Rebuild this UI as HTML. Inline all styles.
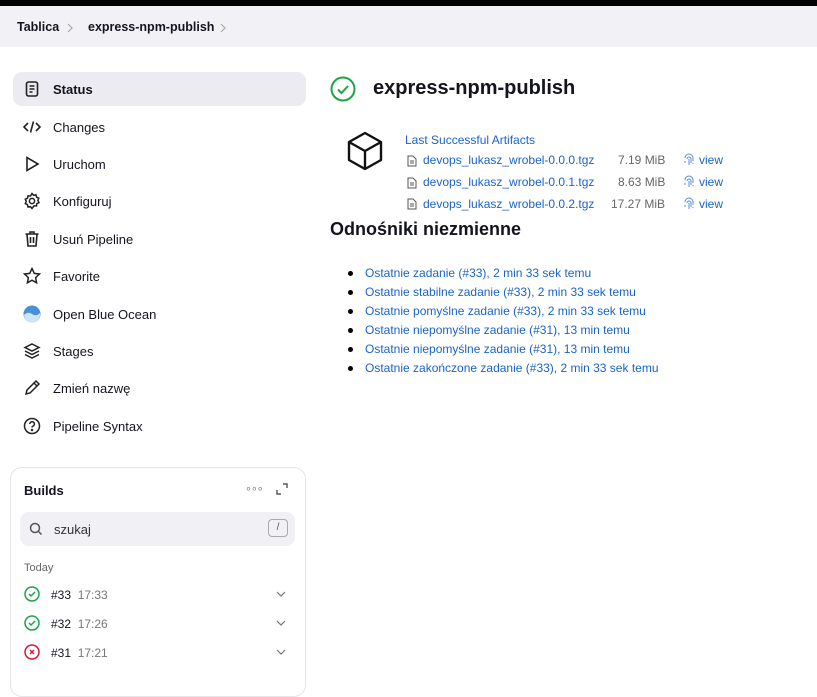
<!DOCTYPE html>
<html><head><meta charset="utf-8"><style>
*{box-sizing:border-box;margin:0;padding:0}
body{width:817px;height:674px;overflow:hidden;background:#fff;font-family:"Liberation Sans",sans-serif;color:#14141f;font-size:13px;position:relative}
.top{position:absolute;left:0;top:0;width:817px;height:6px;background:#000}
.bc{position:absolute;left:0;top:6px;width:817px;height:41px;background:#f2f2f6;font-size:12.5px;font-weight:bold}
.bc span{position:absolute;top:14px}
.it{position:absolute;left:13px;width:293px;height:34px;border-radius:9px}
.it .ic{position:absolute;left:10px;top:8px;width:18px;height:18px}
.it .t{position:absolute;left:40px;top:10px;font-size:13px}
.sel{background:#ebebf1}
a{color:#1a63c8;text-decoration:none}
.card{position:absolute;left:10px;top:467px;width:296px;height:230px;border:1px solid #e5e5ea;border-radius:12px}
.search{position:absolute;left:20px;top:512px;width:275px;height:34px;background:#f0f0f5;border-radius:9px}
li{position:absolute;left:365px;font-size:12px;list-style:none}
li:before{content:"";position:absolute;left:-17px;top:5px;width:5px;height:5px;border-radius:50%;background:#000}
.f{position:absolute;font-size:12px}
</style></head><body>
<div class="top"></div>
<div class="bc"><span style="left:17px">Tablica</span><svg style="position:absolute;left:67px;top:17px" width="7" height="10" fill="none" stroke="#aaa" stroke-width="1.2"><path d="M1 1l4 4-4 4"/></svg><span style="left:88px">express-npm-publish</span><svg style="position:absolute;left:220px;top:17px" width="7" height="10" fill="none" stroke="#aaa" stroke-width="1.2"><path d="M1 1l4 4-4 4"/></svg></div>

<div class="it sel" style="top:72px"><svg class="ic" viewBox="0 0 18 18" fill="none" stroke="#222" stroke-width="1.6"><rect x="3.5" y="2" width="11" height="14" rx="2"/><path d="M6.5 6h5M6.5 9h5M6.5 12h3"/></svg><span class="t" style="font-weight:bold">Status</span></div>
<div class="it" style="top:110px"><svg class="ic" viewBox="0 0 18 18" fill="none" stroke="#222" stroke-width="1.6"><path d="M5 5 1 9l4 4M13 5l4 4-4 4M10.5 3.5l-3 11"/></svg><span class="t">Changes</span></div>
<div class="it" style="top:147px"><svg class="ic" viewBox="0 0 18 18" fill="none" stroke="#222" stroke-width="1.6"><path d="M4 2.5v13l11-6.5z"/></svg><span class="t">Uruchom</span></div>
<div class="it" style="top:184px"><svg class="ic" viewBox="0 0 18 18" fill="none" stroke="#222" stroke-width="1.5"><circle cx="9" cy="9" r="2.6"/><path d="M9 1.5l1.6 1.8 2.4-.4.6 2.3 2.2 1-.9 2.3 1.1 2.1-2.2 1-.3 2.4-2.4-.2L9 16.5l-1.6-1.8-2.4.3-.5-2.4-2.2-1 1-2.2-1-2.2 2.2-1 .5-2.4 2.4.3z"/></svg><span class="t">Konfiguruj</span></div>
<div class="it" style="top:222px"><svg class="ic" viewBox="0 0 18 18" fill="none" stroke="#222" stroke-width="1.6"><path d="M2.5 4h13M7 4V2h4v2M4 4l1 12h8l1-12M7.5 7v6M10.5 7v6"/></svg><span class="t">Usuń Pipeline</span></div>
<div class="it" style="top:259px"><svg class="ic" viewBox="0 0 18 18" fill="none" stroke="#222" stroke-width="1.5"><path d="M9 1.5l2.3 4.9 5.2.6-3.9 3.6 1 5.2L9 13.2l-4.6 2.6 1-5.2L1.5 7l5.2-.6z"/></svg><span class="t">Favorite</span></div>
<div class="it" style="top:297px"><svg class="ic" viewBox="0 0 18 18"><circle cx="9" cy="9" r="8.5" fill="#4a90d9"/><path d="M1 10q4-4 8-1t8-1v1a8 8 0 0 1-16 1z" fill="#cfe4f7"/></svg><span class="t">Open Blue Ocean</span></div>
<div class="it" style="top:334px"><svg class="ic" viewBox="0 0 18 18" fill="none" stroke="#222" stroke-width="1.5"><path d="M9 2l7 3.5L9 9 2 5.5zM2 9l7 3.5L16 9M2 12.5 9 16l7-3.5"/></svg><span class="t">Stages</span></div>
<div class="it" style="top:371px"><svg class="ic" viewBox="0 0 18 18" fill="none" stroke="#222" stroke-width="1.5"><path d="M3 15l1-4 9-9 3 3-9 9zM11 4l3 3"/></svg><span class="t">Zmień nazwę</span></div>
<div class="it" style="top:409px"><svg class="ic" viewBox="0 0 18 18" fill="none" stroke="#222" stroke-width="1.5"><circle cx="9" cy="9" r="7.5"/><path d="M6.8 7a2.3 2.3 0 1 1 3 2.2c-.6.3-.8.7-.8 1.3"/><circle cx="9" cy="13" r=".5" fill="#222"/></svg><span class="t">Pipeline Syntax</span></div>

<div class="card"></div>
<div style="position:absolute;left:24px;top:483px;font-weight:bold;font-size:13px">Builds</div>
<div style="position:absolute;left:245px;top:482px;color:#777;font-size:11px;letter-spacing:-1px">∘∘∘</div>
<svg style="position:absolute;left:276px;top:483px" width="12" height="12" fill="none" stroke="#555" stroke-width="1.4"><path d="M7 1h4v4M5 11H1V7"/></svg>
<div class="search"><svg style="position:absolute;left:9px;top:10px" width="14" height="14" fill="none" stroke="#555" stroke-width="1.5"><circle cx="6" cy="6" r="4.5"/><path d="M9.5 9.5l3 3"/></svg><span style="position:absolute;left:34px;top:10px;color:#333;font-size:13px">szukaj</span><span style="position:absolute;left:248px;top:7px;width:20px;height:18px;border:1px solid #aaa;border-radius:4px;font-size:10px;text-align:center;line-height:16px;color:#555">/</span></div>
<div style="position:absolute;left:24px;top:562px;font-size:11px;color:#666">Today</div>
<svg style="position:absolute;left:24px;top:586px" width="16" height="16" fill="none" stroke="#1ea446" stroke-width="1.5"><circle cx="8" cy="8" r="7"/><path d="M5 8l2 2 4-4"/></svg>
<div style="position:absolute;left:51px;top:588px;font-size:12px">#33 <span style="color:#777">&nbsp;17:33</span></div>
<svg style="position:absolute;left:24px;top:615px" width="16" height="16" fill="none" stroke="#1ea446" stroke-width="1.5"><circle cx="8" cy="8" r="7"/><path d="M5 8l2 2 4-4"/></svg>
<div style="position:absolute;left:51px;top:617px;font-size:12px">#32 <span style="color:#777">&nbsp;17:26</span></div>
<svg style="position:absolute;left:24px;top:644px" width="16" height="16" fill="none" stroke="#d4183c" stroke-width="1.5"><circle cx="8" cy="8" r="7"/><path d="M6 6l4 4M10 6l-4 4"/></svg>
<div style="position:absolute;left:51px;top:646px;font-size:12px">#31 <span style="color:#777">&nbsp;17:21</span></div>
<svg style="position:absolute;left:276px;top:591px" width="10" height="6" fill="none" stroke="#777" stroke-width="1.2"><path d="M1 1l4 4 4-4"/></svg>
<svg style="position:absolute;left:276px;top:620px" width="10" height="6" fill="none" stroke="#777" stroke-width="1.2"><path d="M1 1l4 4 4-4"/></svg>
<svg style="position:absolute;left:276px;top:649px" width="10" height="6" fill="none" stroke="#777" stroke-width="1.2"><path d="M1 1l4 4 4-4"/></svg>

<svg style="position:absolute;left:330px;top:76px" width="26" height="26" fill="none" stroke="#1ea446" stroke-width="2"><circle cx="13" cy="13" r="11.5"/><path d="M8 13.5l3.5 3.5 6.5-7"/></svg>
<div style="position:absolute;left:373px;top:77px;font-size:20px;font-weight:bold">express-npm-publish</div>

<svg style="position:absolute;left:346px;top:131px" width="38" height="40" fill="none" stroke="#111" stroke-width="2.4" stroke-linejoin="round"><path d="M19 2l16 9v18l-16 9-16-9V11zM3 11l16 9 16-9M19 20v18"/></svg>
<a class="f" style="left:405px;top:133px">Last Successful Artifacts</a>
<svg style="position:absolute;left:407px;top:155px" width="10" height="12" fill="none" stroke="#555" stroke-width="1"><path d="M1 1h5l3 3v7H1zM3 6h4M3 8h4"/></svg>
<svg style="position:absolute;left:407px;top:177px" width="10" height="12" fill="none" stroke="#555" stroke-width="1"><path d="M1 1h5l3 3v7H1zM3 6h4M3 8h4"/></svg>
<svg style="position:absolute;left:407px;top:198px" width="10" height="12" fill="none" stroke="#555" stroke-width="1"><path d="M1 1h5l3 3v7H1zM3 6h4M3 8h4"/></svg>
<a class="f" style="left:423px;top:153px">devops_lukasz_wrobel-0.0.0.tgz</a>
<a class="f" style="left:423px;top:175px">devops_lukasz_wrobel-0.0.1.tgz</a>
<a class="f" style="left:423px;top:197px">devops_lukasz_wrobel-0.0.2.tgz</a>
<div class="f" style="left:618px;top:153px;color:#666">7.19 MiB</div>
<div class="f" style="left:618px;top:175px;color:#666">8.63 MiB</div>
<div class="f" style="left:611px;top:197px;color:#666">17.27 MiB</div>
<svg style="position:absolute;left:683px;top:153px" width="12" height="13" fill="none" stroke="#5a8ed8" stroke-width="1"><path d="M2 5a4 4 0 0 1 8 0v3M4 6a2 2 0 0 1 4 0v4M6 6v6M2 8v2M10 10v1"/></svg>
<svg style="position:absolute;left:683px;top:175px" width="12" height="13" fill="none" stroke="#5a8ed8" stroke-width="1"><path d="M2 5a4 4 0 0 1 8 0v3M4 6a2 2 0 0 1 4 0v4M6 6v6M2 8v2M10 10v1"/></svg>
<svg style="position:absolute;left:683px;top:197px" width="12" height="13" fill="none" stroke="#5a8ed8" stroke-width="1"><path d="M2 5a4 4 0 0 1 8 0v3M4 6a2 2 0 0 1 4 0v4M6 6v6M2 8v2M10 10v1"/></svg>
<a class="f" style="left:699px;top:153px">view</a>
<a class="f" style="left:699px;top:175px">view</a>
<a class="f" style="left:699px;top:197px">view</a>

<div style="position:absolute;left:330px;top:219px;font-size:18px;font-weight:bold">Odnośniki niezmienne</div>
<ul>
<li style="top:266px"><a>Ostatnie zadanie (#33), 2 min 33 sek temu</a></li>
<li style="top:285px"><a>Ostatnie stabilne zadanie (#33), 2 min 33 sek temu</a></li>
<li style="top:304px"><a>Ostatnie pomyślne zadanie (#33), 2 min 33 sek temu</a></li>
<li style="top:323px"><a>Ostatnie niepomyślne zadanie (#31), 13 min temu</a></li>
<li style="top:342px"><a>Ostatnie niepomyślne zadanie (#31), 13 min temu</a></li>
<li style="top:361px"><a>Ostatnie zakończone zadanie (#33), 2 min 33 sek temu</a></li>
</ul>
</body></html>
